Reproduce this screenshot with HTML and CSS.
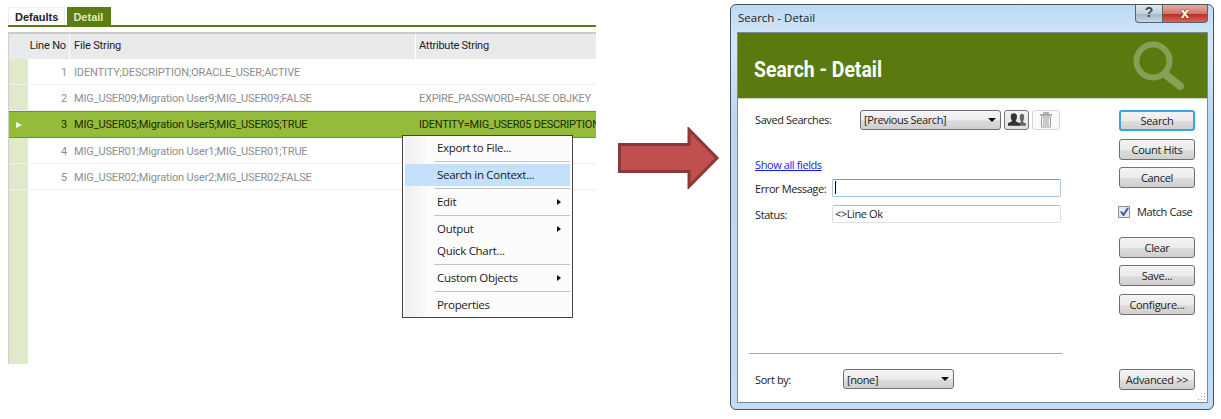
FILE: index.html
```html
<!DOCTYPE html>
<html lang="en">
<head>
    <meta charset="UTF-8">
    <meta name="viewport" content="width=device-width, initial-scale=1.0">
    <title>Search in Context</title>
    <link rel="stylesheet" href="styles.css">
</head>
<body>
<div class="page">

    <div class="data-panel">
        <div class="tabs">
            <span class="tab">Defaults</span>
            <span class="tab active">Detail</span>
        </div>

        <div class="grid">
            <div class="row header">
                <div class="gutter"></div>
                <div class="line-no">Line No</div>
                <div class="file-str">File String</div>
                <div class="attr-str">Attribute String</div>
            </div>
            <div class="row">
                <div class="gutter"></div>
                <div class="line-no">1</div>
                <div class="file-str">IDENTITY;DESCRIPTION;ORACLE_USER;ACTIVE</div>
                <div class="attr-str"></div>
            </div>
            <div class="row">
                <div class="gutter"></div>
                <div class="line-no">2</div>
                <div class="file-str">MIG_USER09;Migration User9;MIG_USER09;FALSE</div>
                <div class="attr-str">EXPIRE_PASSWORD=FALSE OBJKEY</div>
            </div>
            <div class="row selected">
                <div class="gutter"><span class="row-marker"></span></div>
                <div class="line-no">3</div>
                <div class="file-str">MIG_USER05;Migration User5;MIG_USER05;TRUE</div>
                <div class="attr-str">IDENTITY=MIG_USER05 DESCRIPTION</div>
            </div>
            <div class="row">
                <div class="gutter"></div>
                <div class="line-no">4</div>
                <div class="file-str">MIG_USER01;Migration User1;MIG_USER01;TRUE</div>
                <div class="attr-str"></div>
            </div>
            <div class="row">
                <div class="gutter"></div>
                <div class="line-no">5</div>
                <div class="file-str">MIG_USER02;Migration User2;MIG_USER02;FALSE</div>
                <div class="attr-str"></div>
            </div>
            <div class="row filler">
                <div class="gutter"></div>
            </div>
        </div>

        <div class="context-menu">
            <div class="menu-item">Export to File...</div>
            <div class="menu-sep"></div>
            <div class="menu-item hover">Search in Context...</div>
            <div class="menu-sep"></div>
            <div class="menu-item sub">Edit</div>
            <div class="menu-sep"></div>
            <div class="menu-item sub">Output</div>
            <div class="menu-item">Quick Chart...</div>
            <div class="menu-sep"></div>
            <div class="menu-item sub">Custom Objects</div>
            <div class="menu-sep"></div>
            <div class="menu-item">Properties</div>
        </div>
    </div>

    <svg class="big-arrow" width="102" height="62" viewBox="0 0 102 62">
        <path d="M1.5 17.5H71V2.5L99 31L71 59.5V44.5H1.5Z" fill="#c0504d" stroke="#8c3836" stroke-width="3"/>
    </svg>

    <div class="dialog">
        <div class="title-bar">
            <span class="title-text">Search - Detail</span>
            <div class="win-controls">
                <span class="win-btn help">?</span>
                <span class="win-btn close">x</span>
            </div>
        </div>

        <div class="dialog-inner">
            <div class="banner">
                <h1>Search - Detail</h1>
                <svg class="banner-icon" width="52" height="50" viewBox="0 0 52 50">
                    <circle cx="20" cy="20" r="16.5" fill="none" stroke="#86a055" stroke-width="6"/>
                    <path d="M32 33L47 45" stroke="#86a055" stroke-width="8" stroke-linecap="round"/>
                </svg>
            </div>

            <div class="dialog-body">
                <div class="form-col">
                    <div class="form-row saved-row">
                        <label class="saved-label">Saved Searches:</label>
                        <div class="combo saved-combo"><span>[Previous Search]</span><i class="caret"></i></div>
                        <span class="icon-btn">
                            <svg width="18" height="13" viewBox="0 0 20 14">
                                <path d="M11 14V11.5C13 10.5 14.5 10 14.5 9C13.5 8 13 6 13 4C13 1.5 14 .5 15.5 .5S18 1.5 18 4C18 6 17.5 8 16.5 9C16.5 10 18 10.5 20 11.5V14Z" fill="#666"/>
                                <path d="M0 14V11C2.5 10 4.5 9.5 4.5 8.5C3.5 7.5 3 5.5 3 3.5C3 1 4.5 0 6.5 0S10 1 10 3.5C10 5.5 9.5 7.5 8.5 8.5C8.5 9.5 10.5 10 13 11V14Z" fill="#333"/>
                            </svg>
                        </span>
                        <span class="icon-btn disabled">
                            <svg width="14" height="16" viewBox="0 0 14 16">
                                <path d="M1 3H13M5 3V1H9V3" fill="none" stroke="#999" stroke-width="1.5"/>
                                <path d="M2.5 5H11.5V15H2.5Z" fill="none" stroke="#999"/>
                                <path d="M5 6V14M7 6V14M9 6V14" stroke="#999"/>
                            </svg>
                        </span>
                    </div>

                    <a class="show-all" href="#">Show all fields</a>

                    <div class="form-row field-row">
                        <label class="field-label">Error Message:</label>
                        <div class="textbox focused"><span class="text-caret"></span></div>
                    </div>
                    <div class="form-row field-row">
                        <label class="field-label">Status:</label>
                        <div class="textbox">&lt;&gt;Line Ok</div>
                    </div>

                    <div class="form-bottom">
                        <div class="form-rule"></div>
                        <div class="form-row sort-row">
                            <label class="sort-label">Sort by:</label>
                            <div class="combo sort-combo"><span>[none]</span><i class="caret"></i></div>
                        </div>
                    </div>
                </div>

                <div class="button-col">
                    <button class="btn default">Search</button>
                    <button class="btn">Count Hits</button>
                    <button class="btn">Cancel</button>
                    <div class="match-case">
                        <span class="checkbox">
                            <svg width="9" height="9" viewBox="0 0 9 9"><path d="M1 4.5L3.5 8L8 1" fill="none" stroke="#3a5fa8" stroke-width="2"/></svg>
                        </span>
                        <span>Match Case</span>
                    </div>
                    <button class="btn">Clear</button>
                    <button class="btn">Save...</button>
                    <button class="btn">Configure...</button>
                    <button class="btn advanced">Advanced &gt;&gt;</button>
                </div>
            </div>
            <svg class="resize-grip" width="8" height="8" viewBox="0 0 8 8">
                <path d="M6 0h1v1H6zM3 3h1v1H3zM6 3h1v1H6zM0 6h1v1H0zM3 6h1v1H3zM6 6h1v1H6z" fill="#a8a8a8"/>
            </svg>
        </div>
    </div>

</div>
</body>
</html>
```

FILE: styles.css
```css
html, body {
    margin: 0;
    padding: 0;
    background-color: #fff;
}
.page {
    display: flex;
    align-items: flex-start;
    width: 1221px;
    height: 419px;
    overflow: hidden;
}

/* left side: data grid */
.data-panel {
    position: relative;
    width: 588px;
    margin: 7px 0 0 8px;
    flex-shrink: 0;
    font-family: Roboto, "Liberation Sans", sans-serif;
    font-size: 11px;
    letter-spacing: -0.15px;
}
.tabs {
    display: flex;
    height: 18px;
    border-bottom: 2px solid #5a7d12;
    gap: 2px;
    font-family: "Liberation Sans", Arial, sans-serif;
    letter-spacing: 0;
}
.tab {
    padding: 3px 6px 0;
    font-weight: bold;
    font-size: 11px;
    color: #222;
    border: 1px solid #eee;
    border-bottom: 0;
}
.tab.active {
    background-color: #5b7c10;
    color: #dfe9c4;
    border-color: #5b7c10;
    padding: 3px 7px 0 5px;
}
.grid {
    margin-top: 5px;
    border-top: 2px solid #cbcbcb;
    border-left: 1px solid #d0d0d0;
}
.row {
    display: flex;
    height: 26px;
    box-sizing: border-box;
    border-bottom: 1px solid #f0f0f0;
    color: #8e8e8e;
    line-height: 27px;
}
.gutter {
    width: 19px;
    flex-shrink: 0;
    background-color: #e0eaca;
}
.line-no {
    width: 42px;
    flex-shrink: 0;
    box-sizing: border-box;
    padding-right: 3px;
    text-align: right;
    white-space: nowrap;
}
.file-str {
    width: 346px;
    flex-shrink: 0;
    box-sizing: border-box;
    padding-left: 4px;
    white-space: nowrap;
    overflow: hidden;
}
.attr-str {
    flex: 1;
    padding-left: 3px;
    white-space: nowrap;
    overflow: hidden;
    letter-spacing: -0.25px;
}
.row.header {
    height: 25px;
    background-color: #e9eaec;
    color: #222;
    border-bottom: 0;
    line-height: 23px;
}
.row.header .gutter {
    background-color: #e9eaec;
}
.row.header .line-no,
.row.header .file-str {
    border-right: 1px solid #fff;
}
.row.selected {
    height: 27px;
    background-color: #94bb39;
    color: #1c2a06;
    border-top: 1px solid #6e9522;
    border-bottom: 1px solid #6e9522;
    line-height: 25px;
}
.row.selected .gutter {
    background-color: transparent;
    display: flex;
    align-items: center;
    padding-left: 7px;
    width: 12px;
}
.row-marker {
    width: 0;
    height: 0;
    border-left: 6px solid #fff;
    border-top: 3px solid transparent;
    border-bottom: 3px solid transparent;
}
.row.filler {
    height: 174px;
    border-bottom: 0;
}

/* right click menu */
.context-menu {
    position: absolute;
    left: 394px;
    top: 128px;
    width: 165px;
    padding: 1px 2px;
    border: 1px solid #444;
    background: linear-gradient(90deg, #efefef, #f9f9f9) 2px 0 / 21px 100% no-repeat, #fcfcfc;
    font-family: "Open Sans", "Noto Sans", sans-serif;
    font-size: 11.5px;
    letter-spacing: -0.3px;
    color: #1a1a1a;
}
.menu-item {
    position: relative;
    height: 22px;
    line-height: 21px;
    padding-left: 32px;
}
.menu-item.hover {
    background-color: #c4e0fb;
}
.menu-item.sub::after {
    content: "";
    position: absolute;
    right: 9px;
    top: 8px;
    border-left: 4px solid #111;
    border-top: 3.5px solid transparent;
    border-bottom: 3.5px solid transparent;
}
.menu-sep {
    height: 5px;
    margin-left: 29px;
    box-sizing: border-box;
    padding-top: 2px;
}
.menu-sep::after {
    content: "";
    display: block;
    height: 1px;
    background-color: #c4c4c4;
}

.big-arrow {
    margin: 127px 0 0 22px;
    flex-shrink: 0;
}

/* right side: dialog window */
.dialog {
    margin: 4px 0 0 10px;
    width: 484px;
    height: 406px;
    box-sizing: border-box;
    display: flex;
    flex-direction: column;
    flex-shrink: 0;
    padding: 0 5px 6px 6px;
    border: 1px solid #4f5358;
    border-radius: 6px;
    background: linear-gradient(180deg, #bcdaf6 0, #d6e8f9 40px, #b9d5f2 120px, #c3dcf5 100%);
    font-family: "Open Sans", "Noto Sans", sans-serif;
    font-size: 11px;
    color: #222;
}
.title-bar {
    height: 27px;
    flex-shrink: 0;
    display: flex;
    justify-content: space-between;
    align-items: flex-start;
}
.title-text {
    font-size: 11.5px;
    line-height: 25px;
    padding-left: 1px;
    color: #222;
}
.win-controls {
    display: flex;
    height: 18px;
}
.win-btn {
    box-sizing: border-box;
    height: 18px;
    text-align: center;
    font-weight: bold;
    border: 1px solid #59626e;
    border-top: 0;
    line-height: 15px;
}
.win-btn.help {
    width: 28px;
    border-radius: 0 0 0 4px;
    font-family: "Liberation Sans", Arial, sans-serif;
    font-size: 14px;
    color: #445;
    background: linear-gradient(180deg, #dfe7ef, #c2d0de 50%, #a6b6c6 55%, #c8d6e4);
}
.win-btn.close {
    width: 45px;
    border-left: 0;
    border-radius: 0 0 4px 0;
    font-family: "Liberation Sans", Arial, sans-serif;
    font-size: 15px;
    color: #fff;
    text-shadow: 0 0 2px #522;
    background: linear-gradient(180deg, #e6a9a2, #d4756c 50%, #bd3024 55%, #d6655c);
}
.dialog-inner {
    position: relative;
    flex: 1;
    display: flex;
    flex-direction: column;
    background-color: #fff;
    border: 1px solid #7b8a99;
}
.banner {
    height: 66px;
    flex-shrink: 0;
    box-sizing: border-box;
    display: flex;
    justify-content: space-between;
    align-items: center;
    padding: 0 22px 0 16px;
    background-color: #5a7a10;
    border-bottom: 1px solid #cfd6c0;
}
.banner h1 {
    margin: 7px 0 0;
    font-family: Roboto, "Liberation Sans", sans-serif;
    font-size: 22px;
    font-weight: bold;
    color: #fff;
    white-space: nowrap;
    transform: scaleX(0.88); /* the original title face is a condensed one */
    transform-origin: left center;
}
.dialog-body {
    flex: 1;
    display: flex;
    padding: 10px 12px 13px 11px;
    letter-spacing: -0.4px;
}
.form-col {
    width: 316px;
    display: flex;
    flex-direction: column;
}
.form-row {
    display: flex;
    align-items: center;
}
.saved-row {
    padding-left: 6px;
    height: 21px;
}
.saved-label {
    width: 105px;
}
.combo {
    display: flex;
    align-items: center;
    justify-content: space-between;
    box-sizing: border-box;
    height: 20px;
    padding: 0 4px 0 3px;
    border: 1px solid #707070;
    border-radius: 3px;
    background: linear-gradient(180deg, #f4f4f4, #ececec 50%, #dcdcdc 55%, #cfcfcf);
    color: #222;
}
.saved-combo {
    width: 141px;
}
.caret {
    border-top: 4px solid #111;
    border-left: 4px solid transparent;
    border-right: 4px solid transparent;
}
.icon-btn {
    display: flex;
    align-items: center;
    justify-content: center;
    box-sizing: border-box;
    width: 25px;
    height: 20px;
    margin-left: 3px;
    border: 1px solid #777;
    border-radius: 3px;
    background: linear-gradient(180deg, #f4f4f4, #e0e0e0);
}
.icon-btn.disabled {
    width: 28px;
    border-color: #d4d4d4;
    background: #fafafa;
}
.show-all {
    margin: 27px 0 0 6px;
    line-height: 15px;
    color: #1a1af0;
}
.field-row {
    padding-left: 6px;
    margin-bottom: 8px;
}
.show-all + .field-row {
    margin-top: 7px;
}
.field-label {
    width: 77px;
    white-space: nowrap;
}
.textbox {
    box-sizing: border-box;
    width: 229px;
    height: 18px;
    line-height: 16px;
    padding-left: 2px;
    border: 1px solid #dcdfe3;
    border-top-color: #b4b8bd;
    border-radius: 2px;
    color: #222;
}
.textbox.focused {
    border-color: #a9c8e4;
    border-top-color: #6e9cc6;
}
.text-caret {
    display: block;
    width: 1px;
    height: 13px;
    margin: 1px 0 0;
    background-color: #000;
}
.form-bottom {
    margin-top: auto;
}
.form-rule {
    height: 1px;
    background-color: #a8a8a8;
    margin-bottom: 15px;
}
.sort-row {
    padding-left: 6px;
}
.sort-label {
    width: 88px;
}
.sort-combo {
    width: 111px;
}
.button-col {
    display: flex;
    flex-direction: column;
    margin: 1px 0 -1px 57px;
    width: 76px;
}
.btn {
    box-sizing: border-box;
    width: 76px;
    height: 21px;
    flex-shrink: 0;
    margin: 0 0 7.5px;
    padding: 0;
    border: 1px solid #707070;
    border-radius: 3px;
    background: linear-gradient(180deg, #f3f3f3, #ebebeb 50%, #dddddd 55%, #cfcfcf);
    font-family: inherit;
    font-size: 11px;
    letter-spacing: -0.3px;
    color: #222;
}
.btn.default {
    border: 2px solid #3aa5d6;
}
.match-case {
    display: flex;
    align-items: center;
    gap: 7px;
    height: 16px;
    margin: 8px 0 17px -1px;
    white-space: nowrap;
}
.checkbox {
    display: flex;
    align-items: center;
    justify-content: center;
    box-sizing: border-box;
    width: 12px;
    height: 12px;
    flex-shrink: 0;
    border: 1px solid #8e8f8f;
    background-color: #e6eaf2;
}
.btn.advanced {
    margin: auto 0 0;
}
.resize-grip {
    position: absolute;
    right: 1px;
    bottom: 1px;
}
```
